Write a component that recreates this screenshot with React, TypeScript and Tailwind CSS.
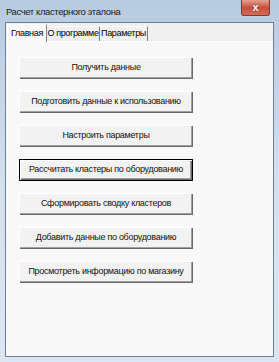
import React from 'react';

const buttons = [
  'Получить данные',
  'Подготовить данные к использованию',
  'Настроить параметры',
  'Рассчитать кластеры по оборудованию',
  'Сформировать сводку кластеров',
  'Добавить данные по оборудованию',
  'Просмотреть информацию по магазину',
];

const tabs = ['Главная', 'О программе', 'Параметры'];

export default function App() {
  return (
    <div
      className="w-[279px] h-[362px] flex flex-col bg-gradient-to-b from-[#b7cbe1] via-[#d3e0ee] to-[#dbe6f2] text-black whitespace-nowrap"
      style={{ fontFamily: '"Liberation Sans", Arial, sans-serif' }}
    >
      {/* заголовок окна */}
      <div className="h-[22px] flex items-start justify-between">
        <span className="pl-[6px] pt-[6px] text-[9.5px] tracking-[-0.4px] leading-[12px] text-[#1b1b1b]">
          Расчет кластерного эталона
        </span>
        <div className="mr-[9px] w-[29px] h-[16px] rounded-b-[3px] border border-t-0 border-[#7a3a32] bg-gradient-to-b from-[#e4a090] via-[#c9503c] to-[#d46a55] flex items-center justify-center">
          <span className="text-white text-[11px] font-bold leading-none [text-shadow:0_0_2px_#333]">x</span>
        </div>
      </div>

      {/* клиентская область */}
      <div className="flex-1 mx-[5px] mb-[5px] border border-[#6e7f93] bg-[#f0f0f0] flex flex-col">
        {/* вкладки */}
        <div className="h-[18px] flex items-end pl-[1px] text-[9px] tracking-[-0.35px]">
          {tabs.map((t, i) =>
            i === 0 ? (
              <div
                key={t}
                className="h-[18px] w-[40px] bg-[#f9f9f9] border-t border-l border-white border-r border-r-[#7f7f7f] flex items-center justify-center relative top-[1px]"
              >
                {t}
              </div>
            ) : (
              <div
                key={t}
                className={`h-[15px] ${i === 1 ? 'w-[53px]' : 'w-[48px]'} border-t border-white border-r border-r-[#7f7f7f] flex items-center justify-center`}
              >
                {t}
              </div>
            )
          )}
        </div>

        {/* страница */}
        <div className="flex-1 border-t border-white bg-[#f9f9f9] flex flex-col gap-[12px] pt-[15px] pl-[13px]">
          {buttons.map((b, i) => (
            <div
              key={b}
              className={`w-[174px] h-[22px] bg-[#f2f2f2] flex items-center justify-center text-[9px] tracking-[-0.3px] text-[#111] ${
                i === 3
                  ? 'border border-black shadow-[inset_1px_1px_0_#fff,inset_-1px_-1px_0_#696969,inset_-2px_-2px_0_#a0a0a0]'
                  : 'shadow-[inset_1px_1px_0_#fff,inset_-1px_-1px_0_#696969,inset_-2px_-2px_0_#a0a0a0]'
              }`}
            >
              {b}
            </div>
          ))}
        </div>
      </div>
    </div>
  );
}
